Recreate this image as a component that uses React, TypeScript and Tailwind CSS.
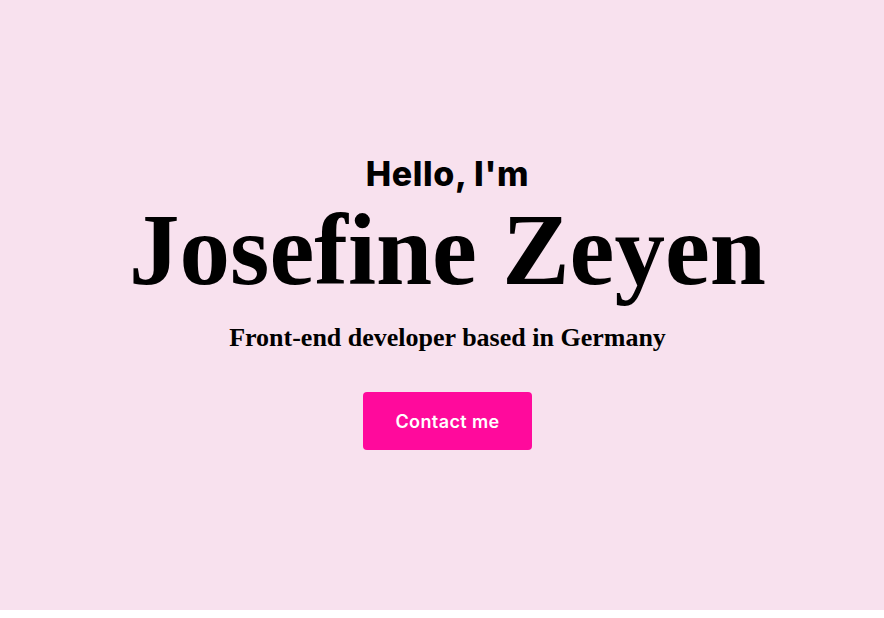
import React from "react";

function Hero() {
  return (
    <section className="h-[610px] bg-[#f8e1ee] flex flex-col items-center justify-center text-center pl-[11px] pb-[6px]">
      <h2 className="font-['Inter',sans-serif] font-extrabold text-[34px] leading-[40px] text-black tracking-[0.6px]">
        Hello, I'm
      </h2>
      <h1 className="font-['Liberation_Serif',serif] font-bold text-[101px] leading-[110px] text-black mt-px">
        Josefine Zeyen
      </h1>
      <p className="font-['Liberation_Serif',serif] font-bold text-[26px] leading-[32px] text-black mt-[17px]">
        Front-end developer based in Germany
      </p>
      <button className="mt-[38px] w-[169px] h-[58px] rounded-[4px] bg-[#ff0a9c] text-white font-['Inter',sans-serif] font-semibold text-[18px] tracking-[0.4px]">
        Contact me
      </button>
    </section>
  );
}

export default function App() {
  return (
    <div className="bg-white min-h-[618px]">
      <Hero />
    </div>
  );
}
